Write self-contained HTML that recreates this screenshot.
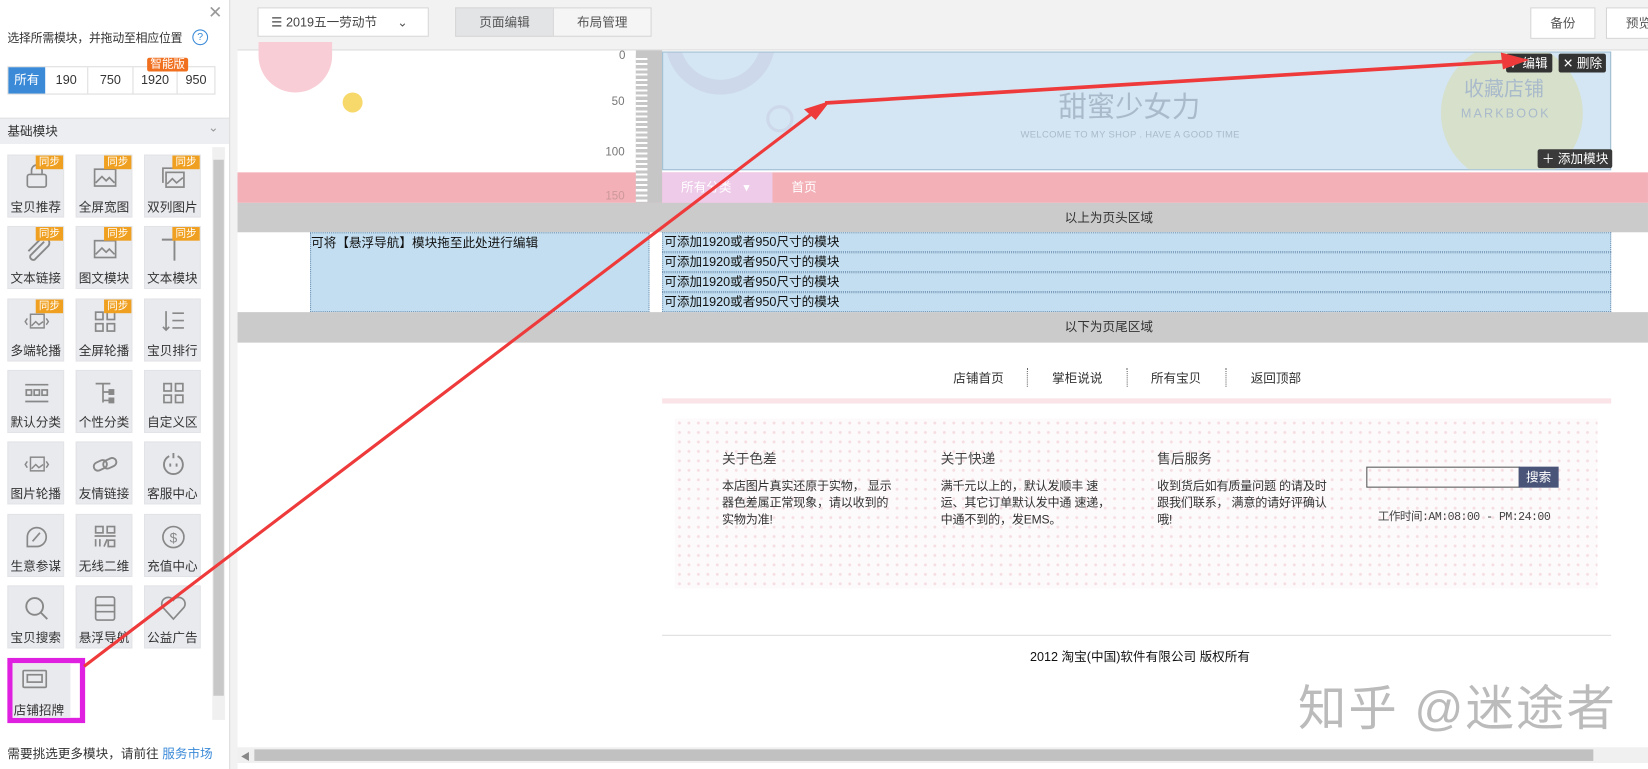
<!DOCTYPE html>
<html><head><meta charset="utf-8"><style>
*{margin:0;padding:0;box-sizing:border-box}
body{width:1648px;height:769px;overflow:hidden;background:#fff;font-family:"Liberation Sans","Noto Sans CJK SC",sans-serif;font-size:12px;color:#333}
#w{position:absolute;left:0;top:0;width:1568px;height:732px;transform:scale(1.051);transform-origin:0 0}
.a{position:absolute}
.tile{position:absolute;width:54px;height:60px;background:#e9eaee;border:1px solid #e2e3e6;text-align:center}
.tile .l{position:absolute;left:0;right:0;top:40px;font-size:12px;color:#333;white-space:nowrap}
.tile svg{position:absolute;left:14px;top:8px}
.tb{position:absolute;right:0;top:0;background:#f0a020;color:#fff;font-size:10px;line-height:13px;padding:0 3px}
.btn{position:absolute;background:#fff;border:1px solid #d6d6d6;font-size:12px;color:#555;text-align:center}
.row{position:absolute;left:630px;width:903px;height:19px;border:1px dotted #6b8fb0;background:#c3def0;font-size:12px;line-height:17px;color:#111;padding-left:1px}
.dark{position:absolute;background:#333;color:#fff;font-size:12px;line-height:18px;border-radius:2px;padding:0 4px}
.ft{position:absolute;top:455px;width:166px;line-height:16px;color:#333;font-size:11.5px;letter-spacing:-0.2px}
</style></head><body><div id="w">
<div class="a" style="left:0;top:0;width:218px;height:732px;background:#fff"></div>
<div class="a" style="left:198px;top:2px;font-size:16px;color:#999">✕</div>
<div class="a" style="left:7px;top:28px;font-size:11.3px;color:#333;letter-spacing:-0.2px">选择所需模块，并拖动至相应位置</div>
<div class="a" style="left:183px;top:28px;width:15px;height:15px;border:1px solid #3a8ad8;border-radius:50%;color:#3a8ad8;font-size:10px;text-align:center;line-height:13px">?</div>
<div class="a" style="left:7px;top:63px;width:198px;height:27px;border:1px solid #ddd;display:flex;font-size:12px;line-height:25px;text-align:center;color:#333">
<div style="width:35px;background:#3a8ad8;color:#fff">所有</div><div style="width:41px;border-right:1px solid #ddd">190</div><div style="width:43px;border-right:1px solid #ddd">750</div><div style="width:42px;border-right:1px solid #ddd">1920</div><div style="flex:1">950</div></div>
<div class="a" style="left:140px;top:55px;background:#f07020;color:#fff;font-size:11px;line-height:13px;padding:0 3px;border-radius:2px">智能版</div>
<div class="a" style="left:0;top:112px;width:218px;height:25px;background:#eceef2;border-top:1px solid #e0e0e0;font-size:12px;line-height:24px;padding-left:7px">基础模块</div>
<div class="a" style="left:198px;top:114px;color:#999;font-size:12px">⌄</div>
<div class="a" style="left:202px;top:140px;width:12px;height:545px;background:#f0f0f0"></div>
<div class="a" style="left:203px;top:152px;width:10px;height:510px;background:#c8c8c8"></div>
<div class="tile" style="left:7px;top:147px"><svg width="26" height="26" viewBox="0 0 26 26" fill="none" stroke="#888" stroke-width="1.6"><rect x="4" y="10" width="18" height="12" rx="2"/><path d="M8 10V6a5 5 0 0110 0v4"/></svg><div class="tb">同步</div><div class="l">宝贝推荐</div></div>
<div class="tile" style="left:72px;top:147px"><svg width="26" height="26" viewBox="0 0 26 26" fill="none" stroke="#888" stroke-width="1.6"><rect x="3" y="5" width="20" height="16"/><path d="M4 18l6-6 4 4 3-3 5 5"/></svg><div class="tb">同步</div><div class="l">全屏宽图</div></div>
<div class="tile" style="left:137px;top:147px"><svg width="26" height="26" viewBox="0 0 26 26" fill="none" stroke="#888" stroke-width="1.6"><rect x="6" y="8" width="17" height="14"/><path d="M3 18V4h16"/><path d="M7 19l5-5 4 4 6-5"/></svg><div class="tb">同步</div><div class="l">双列图片</div></div>
<div class="tile" style="left:7px;top:215px"><svg width="26" height="26" viewBox="0 0 26 26" fill="none" stroke="#888" stroke-width="1.8"><path d="M20 6L7 19a3 3 0 004 4l13-13a5 5 0 00-7-7L5 15"/></svg><div class="tb">同步</div><div class="l">文本链接</div></div>
<div class="tile" style="left:72px;top:215px"><svg width="26" height="26" viewBox="0 0 26 26" fill="none" stroke="#888" stroke-width="1.6"><rect x="3" y="5" width="20" height="16"/><path d="M4 18l6-6 4 4 3-3 5 5"/></svg><div class="tb">同步</div><div class="l">图文模块</div></div>
<div class="tile" style="left:137px;top:215px"><svg width="26" height="26" viewBox="0 0 26 26" fill="none" stroke="#888" stroke-width="1.8"><path d="M2 4h12M14 4v20"/></svg><div class="tb">同步</div><div class="l">文本模块</div></div>
<div class="tile" style="left:7px;top:284px"><svg width="26" height="26" viewBox="0 0 26 26" fill="none" stroke="#888" stroke-width="1.4"><rect x="7" y="6" width="13" height="13"/><path d="M4 10l-2 3 2 3M22 10l2 3-2 3M8 17l4-4 3 3 4-3"/></svg><div class="tb">同步</div><div class="l">多端轮播</div></div>
<div class="tile" style="left:72px;top:284px"><svg width="26" height="26" viewBox="0 0 26 26" fill="none" stroke="#888" stroke-width="1.6"><rect x="4" y="4" width="7" height="7"/><rect x="15" y="4" width="7" height="7"/><rect x="4" y="15" width="7" height="7"/><rect x="15" y="15" width="7" height="7"/></svg><div class="tb">同步</div><div class="l">全屏轮播</div></div>
<div class="tile" style="left:137px;top:284px"><svg width="26" height="26" viewBox="0 0 26 26" fill="none" stroke="#888" stroke-width="1.6"><path d="M6 3v18M3 18l3 3 3-3M12 5h11M12 12h11M12 19h11"/></svg><div class="l">宝贝排行</div></div>
<div class="tile" style="left:7px;top:352px"><svg width="26" height="26" viewBox="0 0 26 26" fill="none" stroke="#888" stroke-width="1.6"><path d="M2 5h22M2 21h22"/><rect x="3" y="10" width="5" height="5"/><rect x="10.5" y="10" width="5" height="5"/><rect x="18" y="10" width="5" height="5"/></svg><div class="l">默认分类</div></div>
<div class="tile" style="left:72px;top:352px"><svg width="26" height="26" viewBox="0 0 26 26" fill="none" stroke="#888" stroke-width="1.6"><path d="M4 4h14M11 4v18M11 12h6M11 20h6"/><rect x="17" y="10" width="4" height="4" fill="#888"/><rect x="17" y="18" width="4" height="4" fill="#888"/></svg><div class="l">个性分类</div></div>
<div class="tile" style="left:137px;top:352px"><svg width="26" height="26" viewBox="0 0 26 26" fill="none" stroke="#888" stroke-width="1.6"><rect x="4" y="4" width="7" height="7"/><rect x="15" y="4" width="7" height="7"/><rect x="4" y="15" width="7" height="7"/><rect x="15" y="15" width="7" height="7"/></svg><div class="l">自定义区</div></div>
<div class="tile" style="left:7px;top:420px"><svg width="26" height="26" viewBox="0 0 26 26" fill="none" stroke="#888" stroke-width="1.4"><rect x="7" y="6" width="13" height="13"/><path d="M4 10l-2 3 2 3M22 10l2 3-2 3M8 17l4-4 3 3 4-3"/></svg><div class="l">图片轮播</div></div>
<div class="tile" style="left:72px;top:420px"><svg width="26" height="26" viewBox="0 0 26 26" fill="none" stroke="#888" stroke-width="1.8"><rect x="2" y="10" width="13" height="8" rx="4" transform="rotate(-25 8 14)"/><rect x="11" y="8" width="13" height="8" rx="4" transform="rotate(-25 17 12)"/></svg><div class="l">友情链接</div></div>
<div class="tile" style="left:137px;top:420px"><svg width="26" height="26" viewBox="0 0 26 26" fill="none" stroke="#888" stroke-width="1.8"><path d="M9 5a9 9 0 108 0"/><path d="M13 2v5M10 12v3M16 12v3"/></svg><div class="l">客服中心</div></div>
<div class="tile" style="left:7px;top:489px"><svg width="26" height="26" viewBox="0 0 26 26" fill="none" stroke="#888" stroke-width="1.6"><path d="M4 22V13a9 9 0 119 9z"/><path d="M9 17l7-8"/></svg><div class="l">生意参谋</div></div>
<div class="tile" style="left:72px;top:489px"><svg width="26" height="26" viewBox="0 0 26 26" fill="none" stroke="#888" stroke-width="1.6"><rect x="4" y="3" width="7" height="6"/><rect x="15" y="3" width="7" height="6"/><path d="M3 12h20M4 15v7M8 15v7M12 22l3-7"/><rect x="16" y="16" width="6" height="6"/></svg><div class="l">无线二维</div></div>
<div class="tile" style="left:137px;top:489px"><svg width="26" height="26" viewBox="0 0 26 26" fill="none" stroke="#888" stroke-width="1.6"><circle cx="13" cy="13" r="10"/><text x="13" y="18" font-size="13" fill="#888" stroke="none" text-anchor="middle" font-family="Liberation Sans">$</text></svg><div class="l">充值中心</div></div>
<div class="tile" style="left:7px;top:557px"><svg width="26" height="26" viewBox="0 0 26 26" fill="none" stroke="#888" stroke-width="1.8"><circle cx="11" cy="11" r="8"/><path d="M17 17l6 6"/></svg><div class="l">宝贝搜索</div></div>
<div class="tile" style="left:72px;top:557px"><svg width="26" height="26" viewBox="0 0 26 26" fill="none" stroke="#888" stroke-width="1.6"><rect x="4" y="2" width="18" height="22" rx="2"/><path d="M4 10h18M4 16h18"/></svg><div class="l">悬浮导航</div></div>
<div class="tile" style="left:137px;top:557px"><svg width="26" height="26" viewBox="0 0 26 26" fill="none" stroke="#888" stroke-width="1.6"><path d="M13 23L3 12a6 6 0 0110-7 6 6 0 0110 7z"/></svg><div class="l">公益广告</div></div>
<div class="a" style="left:7px;top:626px;width:74px;height:62px;border:5px solid #e020e0;background:#fff"></div>
<div class="a" style="left:12px;top:631px;width:55px;height:52px;background:#e9eaee"></div>
<svg class="a" style="left:20px;top:636px" width="26" height="22" viewBox="0 0 26 22" fill="none" stroke="#888" stroke-width="1.6"><rect x="2" y="2" width="22" height="16" rx="1"/><rect x="6" y="6" width="14" height="7"/></svg>
<div class="a" style="left:13px;top:667px;font-size:12px;color:#333">店铺招牌</div>
<div class="a" style="left:7px;top:708px;font-size:12px;color:#333">需要挑选更多模块，请前往 <span style="color:#3a8ad8">服务市场</span></div>
<div class="a" style="left:218px;top:0;width:8px;height:732px;background:#f2f2f2;border-left:1px solid #ddd"></div>
<div class="a" style="left:226px;top:0;width:1342px;height:48px;background:#f2f2f2;border-bottom:1px solid #ddd"></div>
<div class="btn" style="left:245px;top:7px;width:163px;height:28px;line-height:26px;text-align:left;padding-left:12px;color:#444">☰ 2019五一劳动节 <span style="position:absolute;left:132px;color:#555">⌄</span></div>
<div class="btn" style="left:433px;top:7px;width:94px;height:28px;line-height:26px;background:#e3e4e6">页面编辑</div>
<div class="btn" style="left:526px;top:7px;width:94px;height:28px;line-height:26px;background:#f5f5f5">布局管理</div>
<div class="btn" style="left:1456px;top:7px;width:62px;height:30px;line-height:28px">备份</div>
<div class="btn" style="left:1528px;top:7px;width:62px;height:30px;line-height:28px">预览</div>
<div class="a" style="left:246px;top:40px;width:70px;height:48px;background:#f9cdd6;border-radius:0 0 35px 35px"></div>
<div class="a" style="left:326px;top:88px;width:19px;height:19px;background:#f7d86a;border-radius:50%"></div>
<div class="a" style="left:226px;top:164px;width:1342px;height:29px;background:#f3b0b7"></div>
<div class="a" style="left:605px;top:48px;width:25px;height:145px;background:#c6c6c6"></div>
<div class="a" style="left:605px;top:52px;width:11px;height:140px;background:repeating-linear-gradient(#c6c6c6 0 3px,#fff 3px 5px)"></div>
<div class="a" style="left:589px;top:47px;font-size:11px;color:#777">0</div>
<div class="a" style="left:582px;top:91px;font-size:11px;color:#777">50</div>
<div class="a" style="left:576px;top:139px;font-size:11px;color:#777">100</div>
<div class="a" style="left:576px;top:181px;font-size:11px;color:#c99">150</div>
<div class="a" style="left:630px;top:49px;width:903px;height:113px;background:#d4e6f3;border:1px solid #9dbcd0;overflow:hidden">
<div class="a" style="left:2px;top:-65px;width:105px;height:105px;border:14px solid #cdd8ea;border-radius:50%"></div>
<div class="a" style="left:98px;top:50px;width:26px;height:26px;border:3px solid #cdd8ea;border-radius:50%"></div>
<div class="a" style="left:740px;top:-10px;width:135px;height:135px;background:#d6e0cb;border-radius:50%"></div>
<div class="a" style="left:376px;top:30px;font-size:27px;color:#a9bacb">甜蜜少女力</div>
<div class="a" style="left:340px;top:73px;font-size:9px;color:#a9bacb;letter-spacing:.3px">WELCOME TO MY SHOP . HAVE A GOOD TIME</div>
<div class="a" style="left:762px;top:20px;font-size:19px;color:#a9bacb">收藏店铺</div>
<div class="a" style="left:759px;top:51px;font-size:12px;color:#a9bacb;letter-spacing:2px">MARKBOOK</div>
</div>
<div class="dark" style="left:1433px;top:51px">✓ 编辑</div>
<div class="dark" style="left:1483px;top:51px">✕ 删除</div>
<div class="dark" style="left:1463px;top:142px;background:#3a3a3a">＋ 添加模块</div>
<div class="a" style="left:630px;top:164px;width:105px;height:29px;background:#eecbe9;color:#fff;line-height:29px;padding-left:18px">所有分类 <span style="margin-left:8px">▾</span></div>
<div class="a" style="left:753px;top:164px;color:#fff;line-height:29px">首页</div>
<div class="a" style="left:226px;top:193px;width:1342px;height:28px;background:#cbcbcb;text-align:center;line-height:28px;padding-left:316px;color:#333">以上为页头区域</div>
<div class="a" style="left:295px;top:221px;width:323px;height:76px;border:1px dotted #6b8fb0;background:#c3def0;color:#111;line-height:18px">可将【悬浮导航】模块拖至此处进行编辑</div>
<div class="row" style="top:221px">可添加1920或者950尺寸的模块</div>
<div class="row" style="top:240px">可添加1920或者950尺寸的模块</div>
<div class="row" style="top:259px">可添加1920或者950尺寸的模块</div>
<div class="row" style="top:278px">可添加1920或者950尺寸的模块</div>
<div class="a" style="left:226px;top:297px;width:1342px;height:29px;background:#cbcbcb;text-align:center;line-height:29px;padding-left:316px;color:#333">以下为页尾区域</div>
<div class="a" style="left:907px;top:351px;color:#333">店铺首页</div>
<div class="a" style="left:977px;top:350px;height:18px;border-left:1px dotted #666"></div>
<div class="a" style="left:1001px;top:351px;color:#333">掌柜说说</div>
<div class="a" style="left:1072px;top:350px;height:18px;border-left:1px dotted #666"></div>
<div class="a" style="left:1095px;top:351px;color:#333">所有宝贝</div>
<div class="a" style="left:1166px;top:350px;height:18px;border-left:1px dotted #666"></div>
<div class="a" style="left:1190px;top:351px;color:#333">返回顶部</div>
<div class="a" style="left:630px;top:379px;width:903px;height:5px;background:#fbe4e8"></div>
<div class="a" style="left:642px;top:398px;width:878px;height:162px;background-color:#fdfafb;background-image:radial-gradient(#f5dde2 1.2px,transparent 1.6px);background-size:9px 9px"></div>
<div class="a" style="left:687px;top:426px;font-size:13px;color:#444">关于色差</div>
<div class="a" style="left:895px;top:426px;font-size:13px;color:#444">关于快递</div>
<div class="a" style="left:1101px;top:426px;font-size:13px;color:#444">售后服务</div>
<div class="ft" style="left:687px">本店图片真实还原于实物， 显示器色差属正常现象，请以收到的实物为准!</div>
<div class="ft" style="left:895px">满千元以上的，默认发顺丰 速运、其它订单默认发中通 速递，中通不到的，发EMS。</div>
<div class="ft" style="left:1101px">收到货后如有质量问题 的请及时跟我们联系， 满意的请好评确认哦!</div>
<div class="a" style="left:1300px;top:444px;width:146px;height:20px;border:1px solid #555;background:transparent"></div>
<div class="a" style="left:1445px;top:444px;width:38px;height:20px;background:#4a5479;color:#fff;text-align:center;line-height:20px">搜索</div>
<div class="a" style="left:1311px;top:483px;font-size:11px;color:#444;font-family:'Liberation Mono','Noto Sans CJK SC',monospace;letter-spacing:-0.5px">工作时间:AM:08:00 - PM:24:00</div>
<div class="a" style="left:630px;top:604px;width:903px;height:1px;background:#ddd"></div>
<div class="a" style="left:980px;top:616px;color:#111">2012 淘宝(中国)软件有限公司 版权所有</div>
<div class="a" style="left:1235px;top:638px;font-size:46px;color:#bbb;letter-spacing:2px">知乎 @迷途者</div>
<div class="a" style="left:226px;top:711px;width:1342px;height:15px;background:#f0f0f0"></div>
<div class="a" style="left:242px;top:713px;width:1274px;height:11px;background:#c1c1c1"></div>
<div class="a" style="left:229px;top:713px;color:#888;font-size:9px">◀</div>
<svg class="a" style="left:0;top:0" width="1568" height="732">
<line x1="80" y1="634" x2="778" y2="104" stroke="#ee3a3a" stroke-width="3"/>
<polygon points="790,96 765,104 776,114" fill="#ee3a3a"/>
<line x1="785" y1="98" x2="1440" y2="58" stroke="#ee3a3a" stroke-width="3.5"/>
<polygon points="1455,57 1428,50 1430,66" fill="#ee3a3a"/>
</svg>
</div></body></html>
